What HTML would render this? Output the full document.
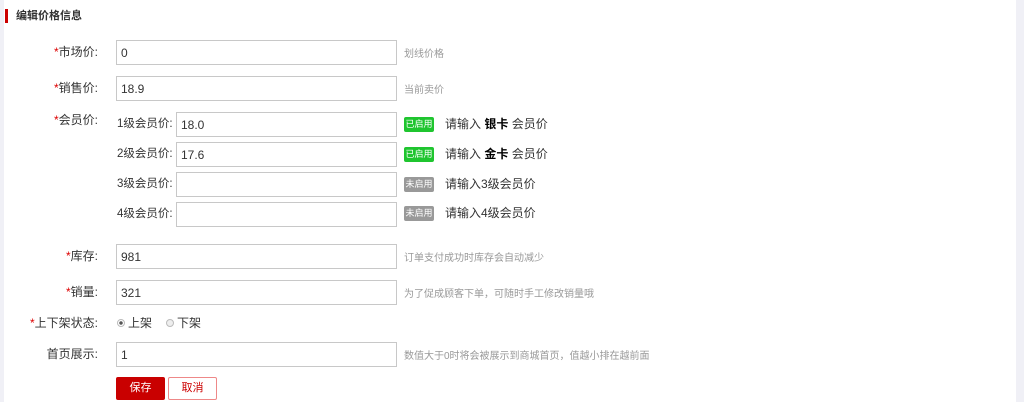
<html><head><style>
body{margin:0;width:1024px;height:402px;overflow:hidden;background:#fff;font-family:"Liberation Sans","Noto Sans CJK SC",sans-serif;font-size:12px;color:#333;position:relative}
.a{position:absolute;line-height:14px}
.lbl{position:absolute;width:98px;text-align:right;left:0;line-height:14px}
.lbl b{color:#d00;font-weight:normal}
.in{position:absolute;left:116px;height:23px;border:1px solid #c8c8c8;display:flex;align-items:center;padding-left:4px;width:275px;line-height:14px}
.hint{position:absolute;left:404px;color:#999;font-size:10px;line-height:12px;margin-top:3px}
.bd{position:absolute;left:404px;width:30px;height:15px;border-radius:2px;color:#fff;font-size:9px;line-height:15px;text-align:center}
.g{background:#1fc52f}.x{background:#999}
.mt{position:absolute;left:445px;font-size:12px;line-height:14px}
.ml{position:absolute;left:117px;font-size:11.5px;line-height:14px}
</style></head><body>
<div class="a" style="left:0;top:0;width:4px;height:402px;background:#f0f0f6"></div>
<div class="a" style="left:1016px;top:0;width:8px;height:402px;background:#f0f0f6"></div>
<div class="a" style="left:5px;top:9px;width:3px;height:14px;background:#c00"></div>
<div class="a" style="left:16px;top:9px;font-weight:bold;font-size:11px">编辑价格信息</div>

<div class="lbl" style="top:45px"><b>*</b>市场价:</div>
<div class="in" style="top:40px">0</div><div class="hint" style="top:46px">划线价格</div>

<div class="lbl" style="top:81px"><b>*</b>销售价:</div>
<div class="in" style="top:76px">18.9</div><div class="hint" style="top:82px">当前卖价</div>

<div class="lbl" style="top:113px"><b>*</b>会员价:</div>
<div class="ml" style="top:117px">1级会员价:</div>
<div class="in" style="top:112px;left:176px;width:215px">18.0</div>
<div class="bd g" style="top:117px">已启用</div><div class="mt" style="top:117px">请输入 <b style="color:#000">银卡</b> 会员价</div>

<div class="ml" style="top:147px">2级会员价:</div>
<div class="in" style="top:142px;left:176px;width:215px">17.6</div>
<div class="bd g" style="top:147px">已启用</div><div class="mt" style="top:147px">请输入 <b style="color:#000">金卡</b> 会员价</div>

<div class="ml" style="top:177px">3级会员价:</div>
<div class="in" style="top:172px;left:176px;width:215px"></div>
<div class="bd x" style="top:177px">未启用</div><div class="mt" style="top:177px">请输入3级会员价</div>

<div class="ml" style="top:207px">4级会员价:</div>
<div class="in" style="top:202px;left:176px;width:215px"></div>
<div class="bd x" style="top:206px">未启用</div><div class="mt" style="top:206px">请输入4级会员价</div>

<div class="lbl" style="top:249px"><b>*</b>库存:</div>
<div class="in" style="top:244px">981</div><div class="hint" style="top:250px">订单支付成功时库存会自动减少</div>

<div class="lbl" style="top:285px"><b>*</b>销量:</div>
<div class="in" style="top:280px">321</div><div class="hint" style="top:286px">为了促成顾客下单，可随时手工修改销量哦</div>

<div class="lbl" style="top:316px"><b>*</b>上下架状态:</div>
<div class="a" style="left:117px;top:319px;width:6px;height:6px;border:1px solid #bbb;border-radius:50%;background:radial-gradient(#555 0 1.5px,#fff 2px)"></div>
<div class="a" style="left:128px;top:316px">上架</div>
<div class="a" style="left:166px;top:319px;width:6px;height:6px;border:1px solid #bbb;border-radius:50%;background:#eee"></div>
<div class="a" style="left:177px;top:316px">下架</div>

<div class="lbl" style="top:347px">首页展示:</div>
<div class="in" style="top:342px">1</div><div class="hint" style="top:348px">数值大于0时将会被展示到商城首页，值越小排在越前面</div>

<div class="a" style="left:116px;top:377px;width:49px;height:23px;background:#c90000;border-radius:2px;color:#fff;text-align:center;line-height:23px;font-size:11px">保存</div>
<div class="a" style="left:168px;top:377px;width:47px;height:21px;border:1px solid #e88;border-radius:2px;color:#c00;text-align:center;line-height:21px;font-size:11px;background:#fff">取消</div>
</body></html>
